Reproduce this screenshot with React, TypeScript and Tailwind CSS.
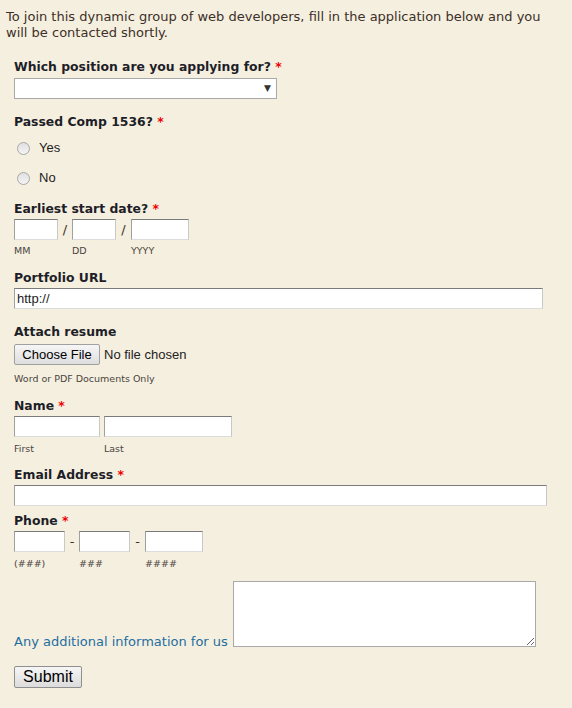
import React from "react";

const inputCls =
  "h-[21px] border border-t-[#7a7a7a] border-l-[#a0a0a0] border-r-[#c8c8c8] border-b-[#dcdcdc] bg-white px-[2px] text-[13px] outline-none";

function Req() {
  return <span className="text-[#ee0000]"> *</span>;
}

function Label({ children, className = "" }: { children: React.ReactNode; className?: string }) {
  return <div className={`text-[12.4px] font-bold leading-4 text-[#1e1e28] ${className}`}>{children}</div>;
}

function Hint({ children, className = "" }: { children: React.ReactNode; className?: string }) {
  return <div className={`text-[9.5px] leading-3 text-[#4a4440] ${className}`}>{children}</div>;
}

function Radio({ label }: { label: string }) {
  return (
    <label className="flex h-5 items-center pl-[3px]">
      <span className="h-[13px] w-[13px] rounded-full border border-[#a8a8a8] bg-gradient-to-b from-[#e0e0e0] to-[#f4f4f4]" />
      <span className="ml-[9px] font-['Liberation_Sans',Arial,sans-serif] text-[13px] text-[#222]">{label}</span>
    </label>
  );
}

function Sep({ children, className = "" }: { children: React.ReactNode; className?: string }) {
  return <span className={`text-center text-[13px] leading-[21px] ${className}`}>{children}</span>;
}

export default function App() {
  return (
    <div className="min-h-[708px] w-[572px] bg-[#f5efdf] font-['DejaVu_Sans',Verdana,sans-serif] text-[#3d3028]">
      <p className="max-w-[550px] px-[6px] pt-[9px] text-[13px] leading-4">
        To join this dynamic group of web developers, fill in the application below and you will be contacted shortly.
      </p>

      <form className="px-[14px]" onSubmit={(e) => e.preventDefault()}>
        <Label className="mt-[18px]">
          Which position are you applying for?
          <Req />
        </Label>
        <div className="relative mt-[3px] w-[263px]">
          <div className="h-[21px] border border-[#a9a9a9] bg-white" />
          <span className="absolute right-[6px] top-[4px] text-[9px] text-[#333]">▼</span>
        </div>

        <Label className="mt-[15px]">
          Passed Comp 1536?
          <Req />
        </Label>
        <div className="mt-[8px] flex flex-col gap-[10px]">
          <Radio label="Yes" />
          <Radio label="No" />
        </div>

        <Label className="mt-[13px]">
          Earliest start date?
          <Req />
        </Label>
        <div className="mt-[2px] flex items-start">
          <div className="flex flex-col">
            <input className={`${inputCls} w-[44px]`} />
            <Hint className="mt-[5px]">MM</Hint>
          </div>
          <Sep className="w-[14px]">/</Sep>
          <div className="flex flex-col">
            <input className={`${inputCls} w-[44px]`} />
            <Hint className="mt-[5px]">DD</Hint>
          </div>
          <Sep className="w-[15px]">/</Sep>
          <div className="flex flex-col">
            <input className={`${inputCls} w-[58px]`} />
            <Hint className="mt-[5px]">YYYY</Hint>
          </div>
        </div>

        <Label className="mt-[13px]">Portfolio URL</Label>
        <input
          defaultValue="http://"
          className={`${inputCls} mt-[2px] block w-[529px] font-['Liberation_Sans',Arial,sans-serif] text-[#222]`}
        />

        <Label className="mt-[15px]">Attach resume</Label>
        <div className="mt-[4px] flex items-center font-['Liberation_Sans',Arial,sans-serif] text-[13px] text-[#222]">
          <button
            type="button"
            className="h-[21px] w-[86px] rounded-[2px] border border-[#a0a0a0] bg-gradient-to-b from-[#f6f6f6] to-[#dedede] text-[13px] text-black"
          >
            Choose File
          </button>
          <span className="ml-[4px]">No file chosen</span>
        </div>
        <Hint className="mt-[8px]">Word or PDF Documents Only</Hint>

        <Label className="mt-[13px]">
          Name
          <Req />
        </Label>
        <div className="mt-[2px] flex items-start gap-[4px]">
          <div className="flex flex-col">
            <input className={`${inputCls} w-[86px]`} />
            <Hint className="mt-[6px]">First</Hint>
          </div>
          <div className="flex flex-col">
            <input className={`${inputCls} w-[128px]`} />
            <Hint className="mt-[6px]">Last</Hint>
          </div>
        </div>

        <Label className="mt-[12px]">
          Email Address
          <Req />
        </Label>
        <input className={`${inputCls} mt-[2px] block w-[533px]`} />

        <Label className="mt-[7px]">
          Phone
          <Req />
        </Label>
        <div className="mt-[2px] flex items-start">
          <div className="flex flex-col">
            <input className={`${inputCls} w-[51px]`} />
            <Hint className="mt-[6px]">(###)</Hint>
          </div>
          <Sep className="w-[14px]">-</Sep>
          <div className="flex flex-col">
            <input className={`${inputCls} w-[51px]`} />
            <Hint className="mt-[6px]">###</Hint>
          </div>
          <Sep className="w-[15px]">-</Sep>
          <div className="flex flex-col">
            <input className={`${inputCls} w-[58px]`} />
            <Hint className="mt-[6px]">####</Hint>
          </div>
        </div>

        <div className="mt-[11px] flex items-end">
          <span className="text-[13px] leading-[10px] text-[#1f6ea0]">Any additional information for us</span>
          <textarea className="ml-[5px] h-[66px] w-[303px] resize border border-[#a9a9a9] bg-white outline-none" />
        </div>

        <button
          type="submit"
          className="mt-[19px] h-[22px] w-[68px] rounded-[2px] border border-[#8f8f8f] bg-gradient-to-b from-[#f6f6f6] to-[#dcdcdc] font-['Liberation_Sans',Arial,sans-serif] text-[16px] leading-none text-black"
        >
          Submit
        </button>
      </form>
    </div>
  );
}
